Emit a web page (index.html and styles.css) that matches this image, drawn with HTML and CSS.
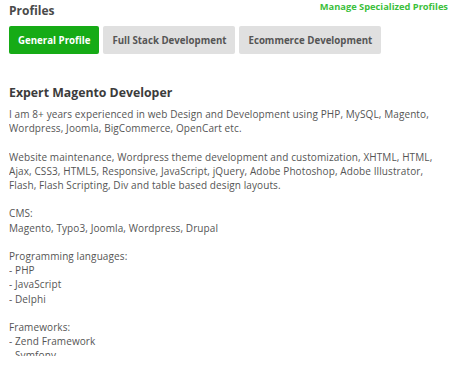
FILE: index.html
```html
<!DOCTYPE html>
<html>
<head>
<meta charset="utf-8">
<link rel="stylesheet" href="styles.css">
</head>
<body>
<div class="panel">
  <div class="top">
    <h2 class="title">Profiles</h2>
    <a class="manage" href="#">Manage Specialized Profiles</a>
  </div>
  <div class="tabs">
    <button class="tab active">General Profile</button>
    <button class="tab">Full Stack Development</button>
    <button class="tab">Ecommerce Development</button>
  </div>
  <div class="content">
    <h3 class="headline">Expert Magento Developer</h3>
    <p class="desc">I am 8+ years experienced in web Design and Development using PHP, MySQL, Magento,
Wordpress, Joomla, BigCommerce, OpenCart etc.

Website maintenance, Wordpress theme development and customization, XHTML, HTML,
Ajax, CSS3, HTML5, Responsive, JavaScript, jQuery, Adobe Photoshop, Adobe Illustrator,
Flash, Flash Scripting, Div and table based design layouts.

CMS:
Magento, Typo3, Joomla, Wordpress, Drupal

Programming languages:
- PHP
- JavaScript
- Delphi

Frameworks:
- Zend Framework
- Symfony</p>
  </div>
</div>
</body>
</html>
```
FILE: styles.css
```css
html, body {
  margin: 0;
  padding: 0;
  background: #fff;
}
body {
  font-family: "Open Sans", "Liberation Sans", sans-serif;
  color: #555;
}
.panel {
  padding: 0 8px 0 9px;
}
.top {
  display: flex;
  justify-content: space-between;
  align-items: flex-start;
  height: 25px;
}
.title {
  margin: 3px 0 0;
  font-size: 12px;
  font-weight: 700;
  color: #4a4a4a;
  line-height: 16px;
}
.manage {
  margin-top: 0;
  font-size: 9.3px;
  font-weight: 700;
  color: #3cbf3c;
  text-decoration: none;
  line-height: 13px;
}
.tabs {
  display: flex;
  gap: 4px;
  margin-top: 1px;
}
.tab {
  height: 28px;
  padding: 0 9px;
  border: none;
  border-radius: 2px;
  background: #e0e0e0;
  color: #555;
  font-family: inherit;
  font-size: 9.7px;
  font-weight: 700;
}
.tab.active {
  background: #16ab16;
  color: #fff;
}
.content {
  margin-top: 30px;
  height: 272px;
  overflow: hidden;
}
.headline {
  margin: 0;
  font-size: 12.3px;
  font-weight: 700;
  color: #3c3c3c;
  line-height: 18px;
}
.desc {
  margin: 5px 0 0;
  white-space: pre;
  font-size: 10px;
  letter-spacing: 0.1px;
  line-height: 14.2px;
  color: #555;
}
```
